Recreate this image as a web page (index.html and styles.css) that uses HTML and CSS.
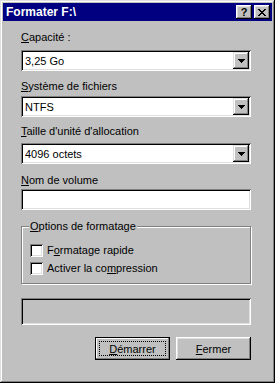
FILE: index.html
```html
<!DOCTYPE html>
<html lang="fr">

<head>
    <meta charset="utf-8">
    <link rel="stylesheet" href="styles.css">
</head>

<body>
    <div class="window">
        <div class="titlebar">
            <span class="title">Formater F:\</span>
            <div class="title-buttons">
                <button class="tbtn">?</button>
                <button class="tbtn">
                    <svg width="8" height="7" viewBox="0 0 8 7" shape-rendering="crispEdges">
                        <path d="M0 0h2v1H0zM6 0h2v1H6zM1 1h2v1H1zM5 1h2v1H5zM2 2h4v1H2zM3 3h2v1H3zM2 4h4v1H2zM1 5h2v1H1zM5 5h2v1H5zM0 6h2v1H0zM6 6h2v1H6z" fill="#000"/>
                    </svg>
                </button>
            </div>
        </div>

        <div class="content">
            <label class="lbl lbl1"><u>C</u>apacité :</label>
            <div class="combo c1">
                <span class="combo-value">3,25 Go</span>
                <span class="combo-btn">
                    <svg width="7" height="4" viewBox="0 0 7 4" shape-rendering="crispEdges"><path d="M0 0h7v1H0zM1 1h5v1H1zM2 2h3v1H2zM3 3h1v1H3z" fill="#000"/></svg>
                </span>
            </div>

            <label class="lbl lbl2"><u>S</u>ystème de fichiers</label>
            <div class="combo c2">
                <span class="combo-value">NTFS</span>
                <span class="combo-btn">
                    <svg width="7" height="4" viewBox="0 0 7 4" shape-rendering="crispEdges"><path d="M0 0h7v1H0zM1 1h5v1H1zM2 2h3v1H2zM3 3h1v1H3z" fill="#000"/></svg>
                </span>
            </div>

            <label class="lbl lbl3"><u>T</u>aille d'unité d'allocation</label>
            <div class="combo c3">
                <span class="combo-value">4096 octets</span>
                <span class="combo-btn">
                    <svg width="7" height="4" viewBox="0 0 7 4" shape-rendering="crispEdges"><path d="M0 0h7v1H0zM1 1h5v1H1zM2 2h3v1H2zM3 3h1v1H3z" fill="#000"/></svg>
                </span>
            </div>

            <label class="lbl lbl4"><u>N</u>om de volume</label>
            <div class="textbox"></div>

            <fieldset class="group">
                <legend><u>O</u>ptions de formatage</legend>
                <div class="check-row">
                    <span class="checkbox"></span>
                    <span>F<u>o</u>rmatage rapide</span>
                </div>
                <div class="check-row">
                    <span class="checkbox"></span>
                    <span>Activer la co<u>m</u>pression</span>
                </div>
            </fieldset>

            <div class="progress"></div>

            <div class="buttons">
                <button class="btn default"><span class="focus"><u>D</u>émarrer</span></button>
                <button class="btn"><u>F</u>ermer</button>
            </div>
        </div>
    </div>
</body>

</html>
```

FILE: styles.css
```css
body{
    margin:0;
}

.window{
    width:275px;
    height:383px;
    box-sizing:border-box;
    padding:3px;
    background-color:#c0c0c0;
    box-shadow: inset -1px -1px #000, inset 1px 1px #dfdfdf, inset -2px -2px #808080, inset 2px 2px #fff;
    font-family:"Liberation Sans", Arial, sans-serif;
    font-size:11px;
    color:#000;
}

.titlebar{
    height:18px;
    background-color:#000080;
    display:flex;
    align-items:center;
    justify-content:space-between;
    padding:0 2px 0 3px;
    color:#fff;
    font-weight:bold;
    font-size:12px;
}

.title-buttons{
    display:flex;
    gap:2px;
}

.tbtn{
    width:16px;
    height:14px;
    padding:0;
    border:none;
    background-color:#c0c0c0;
    box-shadow: inset -1px -1px #000, inset 1px 1px #fff, inset -2px -2px #808080, inset 2px 2px #dfdfdf;
    display:flex;
    align-items:center;
    justify-content:center;
    font-family:"Liberation Sans", Arial, sans-serif;
    font-weight:bold;
    font-size:11px;
    line-height:11px;
    color:#000;
}

.content{
    padding:10px 21px 0 18px;
}

.lbl{
    display:block;
    height:13px;
    line-height:13px;
}

.lbl1{ margin-bottom:6px; }
.lbl2{ margin-top:9px; margin-bottom:3px; }
.lbl3{ margin-top:8px; margin-bottom:5px; }
.lbl4{ margin-top:10px; margin-bottom:2px; }

.combo, .textbox{
    height:21px;
    box-sizing:border-box;
    background-color:#fff;
    box-shadow: inset 1px 1px #808080, inset -1px -1px #fff, inset 2px 2px #000, inset -2px -2px #dfdfdf;
}

.combo{
    display:flex;
    align-items:center;
    justify-content:space-between;
    padding:2px;
}

.combo-value{
    padding-left:2px;
}

.combo-btn{
    width:16px;
    height:17px;
    box-sizing:border-box;
    background-color:#c0c0c0;
    box-shadow: inset -1px -1px #000, inset 1px 1px #dfdfdf, inset -2px -2px #808080, inset 2px 2px #fff;
    display:flex;
    align-items:center;
    justify-content:center;
}

.group{
    margin:10px 0 0 0;
    padding:8px 8px 6px 8px;
    width:230px;
    box-sizing:border-box;
    border:1px solid #808080;
    box-shadow: inset 1px 1px #fff, 1px 1px #fff;
}

.group legend{
    padding:0 1px;
    margin-left:-1px;
    line-height:13px;
    background-color:#c0c0c0;
}

.check-row{
    height:18px;
    display:flex;
    align-items:center;
    gap:4px;
}

.checkbox{
    width:13px;
    height:13px;
    box-sizing:border-box;
    background-color:#fff;
    box-shadow: inset 1px 1px #808080, inset -1px -1px #fff, inset 2px 2px #000, inset -2px -2px #dfdfdf;
}

.progress{
    margin-top:14px;
    height:27px;
    box-shadow: inset 1px 1px #808080, inset -1px -1px #fff, inset 2px 2px #000, inset -2px -2px #dfdfdf;
}

.buttons{
    margin-top:12px;
    display:flex;
    justify-content:flex-end;
    gap:6px;
}

.btn{
    width:75px;
    height:23px;
    padding:0;
    border:none;
    background-color:#c0c0c0;
    box-shadow: inset -1px -1px #000, inset 1px 1px #fff, inset -2px -2px #808080, inset 2px 2px #dfdfdf;
    font-family:"Liberation Sans", Arial, sans-serif;
    font-size:11px;
    color:#000;
}

.btn.default{
    border:1px solid #000;
    box-shadow: inset -1px -1px #808080, inset 1px 1px #fff;
    padding:3px;
}

.focus{
    display:flex;
    align-items:center;
    justify-content:center;
    height:100%;
    box-sizing:border-box;
    border:1px dotted #000;
}
```
